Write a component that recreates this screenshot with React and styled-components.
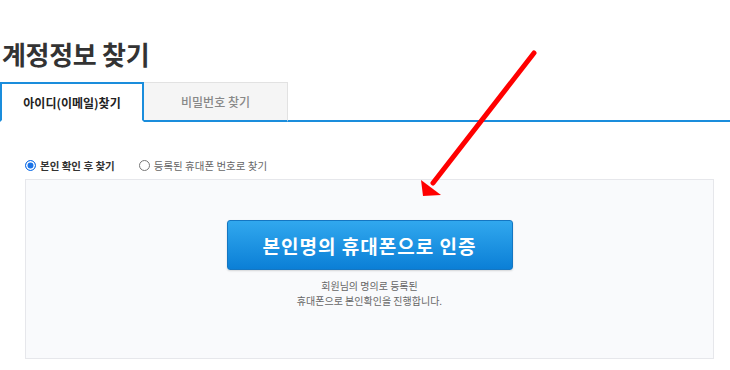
import React from "react";
import styled, { createGlobalStyle } from "styled-components";

const GlobalStyle = createGlobalStyle`
  html, body {
    margin: 0;
    padding: 0;
    background: #fff;
  }
  body {
    font-family: "Noto Sans CJK KR", "Noto Sans", sans-serif;
    color: #333;
  }
`;

const Page = styled.div`
  position: relative;
  width: 730px;
  height: 370px;
  overflow: hidden;
`;

const Title = styled.h2`
  margin: 0;
  padding: 34px 0 0 2px;
  font-size: 26px;
  line-height: 40px;
  font-weight: 700;
  color: #333;
  letter-spacing: -0.3px;
`;

const TabBar = styled.div`
  display: flex;
  margin-top: 8px;
  border-bottom: 2px solid #1a8ddc;
  height: 38px;
`;

const Tab = styled.div`
  width: 144px;
  box-sizing: border-box;
  height: 40px;
  margin-bottom: -2px;
  display: flex;
  align-items: center;
  justify-content: center;
  font-size: 12px;
  font-weight: ${(p) => (p.$active ? 700 : 500)};
  color: ${(p) => (p.$active ? "#222" : "#888")};
  background: ${(p) => (p.$active ? "#fff" : "#f5f5f5")};
  border: ${(p) => (p.$active ? "2px solid #1a8ddc" : "1px solid #e2e2e2")};
  border-bottom: ${(p) => (p.$active ? "2px solid #fff" : "2px solid #1a8ddc")};
  ${(p) => !p.$active && "border-left: none;"}
`;

const RadioRow = styled.div`
  display: flex;
  align-items: center;
  gap: 24px;
  padding: 34px 0 0 25px;
  height: 18px;
`;

const RadioLabel = styled.label`
  display: flex;
  align-items: center;
  gap: 4px;
  font-size: 10.5px;
  font-weight: ${(p) => (p.$checked ? 700 : 400)};
  color: ${(p) => (p.$checked ? "#333" : "#666")};
`;

const RadioDot = styled.span`
  width: 11px;
  height: 11px;
  border-radius: 50%;
  box-sizing: border-box;
  border: 1px solid ${(p) => (p.$checked ? "#1a73e8" : "#777")};
  background: ${(p) => (p.$checked ? "#1a73e8" : "#fff")};
  box-shadow: ${(p) => (p.$checked ? "inset 0 0 0 1.5px #fff" : "none")};
`;

const Box = styled.div`
  margin: 5px 0 0 25px;
  width: 689px;
  height: 180px;
  box-sizing: border-box;
  background: #f9fafc;
  border: 1px solid #e6e7eb;
  display: flex;
  flex-direction: column;
  align-items: center;
  padding-top: 40px;
`;

const AuthButton = styled.button`
  width: 286px;
  height: 50px;
  border-radius: 3px;
  border: 1px solid #1476c2;
  background: linear-gradient(#31a8ee, #0b7fd6);
  color: #fff;
  font-family: inherit;
  font-size: 19px;
  font-weight: 700;
  letter-spacing: 1px;
  box-shadow: 0 1px 2px rgba(0, 0, 0, 0.15);
`;

const Desc = styled.p`
  margin: 8px 0 0;
  font-size: 10px;
  line-height: 15px;
  color: #666;
  text-align: center;
`;

const Arrow = styled.svg`
  position: absolute;
  left: 0;
  top: 0;
  pointer-events: none;
`;

export default function App() {
  return (
    <Page>
      <GlobalStyle />
      <Title>계정정보 찾기</Title>
      <TabBar>
        <Tab $active>아이디(이메일)찾기</Tab>
        <Tab>비밀번호 찾기</Tab>
      </TabBar>
      <RadioRow>
        <RadioLabel $checked>
          <RadioDot $checked />
          본인 확인 후 찾기
        </RadioLabel>
        <RadioLabel>
          <RadioDot />
          등록된 휴대폰 번호로 찾기
        </RadioLabel>
      </RadioRow>
      <Box>
        <AuthButton>본인명의 휴대폰으로 인증</AuthButton>
        <Desc>
          회원님의 명의로 등록된
          <br />
          휴대폰으로 본인확인을 진행합니다.
        </Desc>
      </Box>
      <Arrow width="730" height="370">
        <line x1="534" y1="53" x2="433" y2="183" stroke="#f00" strokeWidth="5" strokeLinecap="round" />
        <polygon points="423,196 421,180 441,195" fill="#f00" />
      </Arrow>
    </Page>
  );
}
